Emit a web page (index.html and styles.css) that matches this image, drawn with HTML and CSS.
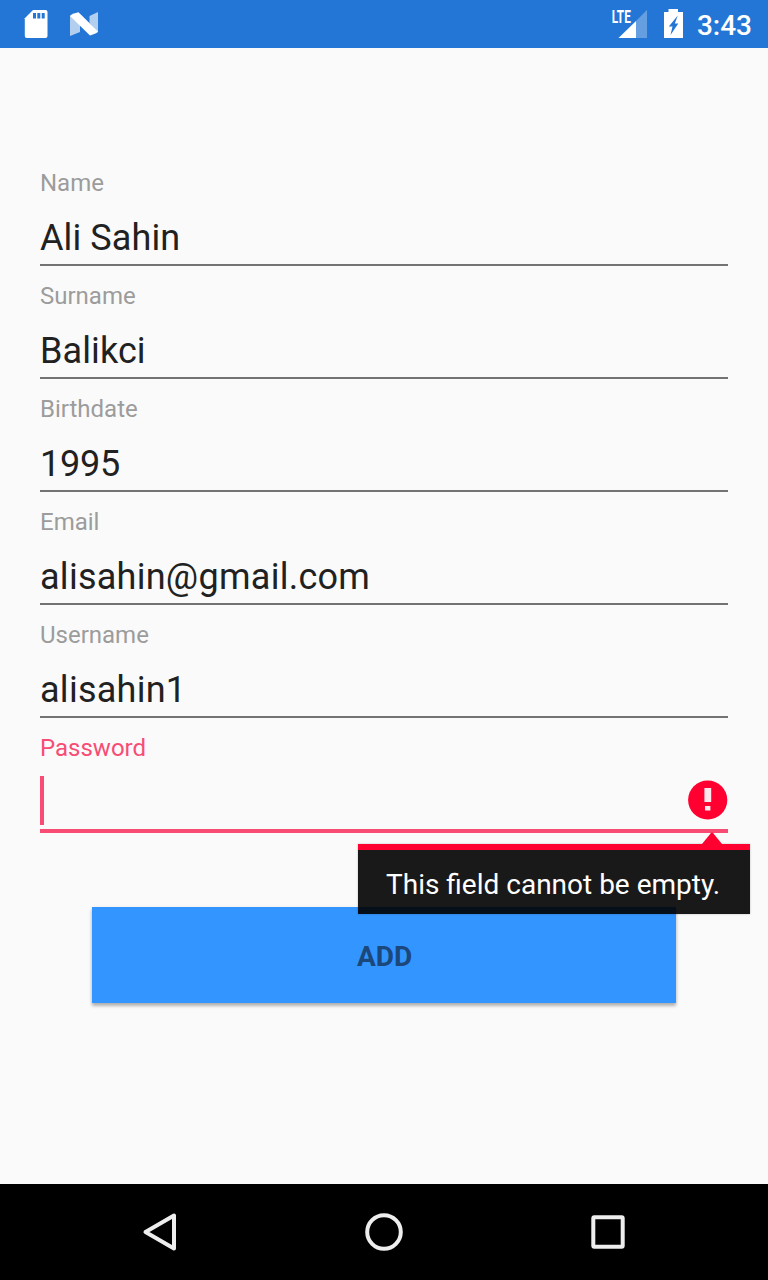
FILE: index.html
```html
<!DOCTYPE html>
<html lang="en">
<head>
<meta charset="utf-8">
<title>Add user</title>
<link rel="stylesheet" href="styles.css">
</head>
<body>
<div class="screen">
  <header class="status-bar">
    <svg class="status-icons" width="100" height="48" viewBox="0 0 100 48">
      <path fill="#fff" d="M33 10H45.500Q47.500 10 47.500 12V36Q47.500 38 45.500 38H26.800Q24.800 38 24.800 36V18.300Z"/>
      <path fill="#2376d5" d="M33 13h3v5.500h-3zM37.300 13h3v5.500h-3zM41.700 13h3v5.500h-3z"/>
      <path fill="#fff" fill-opacity=".65" d="M70 15.500L80 25V32L70 36ZM98 12V32.500L89.500 23V16Z"/>
      <path fill="#fff" d="M70 16Q70 14.500 78.500 12.300L98 31.500Q98 33 90 35.500Z"/>
    </svg>
    <div class="status-right">
      <svg width="80" height="48" viewBox="0 0 80 48">
        <text class="lte" x="3.800" y="22.800" textLength="19" lengthAdjust="spacingAndGlyphs">LTE</text>
        <path fill="#fff" fill-opacity=".3" d="M39 10V38H28V21Z"/>
        <path fill="#fff" d="M28 21V38H10.500Z"/>
        <path fill="#fff" d="M68.500 9h9.500v3h5v26h-19V12h4.500z" transform="translate(-8 0)"/>
        <path fill="#2376d5" d="M69.800 15.500L60.800 26.500H64.500L62.500 35L70.300 23.500H66.800Z"/>
      </svg>
      <span class="clock">3:43</span>
    </div>
  </header>

  <main class="form">
    <div class="field"><label class="label">Name</label><div class="value name">Ali Sahin</div></div>
    <div class="field"><label class="label">Surname</label><div class="value name">Balikci</div></div>
    <div class="field"><label class="label">Birthdate</label><div class="value year">1995</div></div>
    <div class="field"><label class="label">Email</label><div class="value account">alisahin@gmail.com</div></div>
    <div class="field"><label class="label">Username</label><div class="value account">alisahin1</div></div>
    <div class="field focused">
      <label class="label">Password</label>
      <div class="entry">
        <span class="caret"></span>
        <svg class="error-icon" width="40" height="40" viewBox="0 0 40 40">
          <circle cx="19.700" cy="20" r="19.600" fill="#ff0030"/>
          <path fill="#fce8ec" d="M16.400 8h6.800v14h-6.800zM17 26h5.400v4.500h-5.400z"/>
        </svg>
      </div>
      <div class="tooltip">
        <svg class="pointer" width="20" height="12" viewBox="0 0 20 12"><path fill="#ff0030" d="M0 12L8.800 1.200Q10 0 11.200 1.200L20 12Z"/></svg>
        This field cannot be empty.
      </div>
    </div>
    <div class="button">ADD</div>
  </main>

  <nav class="nav-bar">
    <svg width="48" height="48" viewBox="0 0 48 48"><path d="M38 7.500V40.500L9.500 24Z"/></svg>
    <svg width="48" height="48" viewBox="0 0 48 48"><circle cx="24" cy="24" r="16.800"/></svg>
    <svg width="48" height="48" viewBox="0 0 48 48"><rect x="9.300" y="9.300" width="29.400" height="29.400" rx="1"/></svg>
  </nav>
</div>
</body>
</html>
```
FILE: styles.css
```css
* { box-sizing: border-box; }

body {
  margin: 0;
  font-family: Roboto, sans-serif;
}

.screen {
  display: flex;
  flex-direction: column;
  width: 768px;
  height: 1280px;
  background: #fafafa;
}

.screen svg { display: block; }

.status-bar {
  display: flex;
  justify-content: space-between;
  height: 48px;
  padding-right: 16px;
  background: #2376d5;
}

.status-right { display: flex; }

.lte {
  font: 700 18px Roboto, sans-serif;
  fill: #fff;
}

.clock {
  margin-left: 9px;
  color: #fff;
  font-size: 28px;
  font-weight: 500;
  line-height: 51px;
}

.form {
  flex: 1;
  padding: 105px 40px 0;
}

.field {
  height: 113px;
  padding-top: 16px;
  border-bottom: 2px solid #737373;
}

.label {
  display: block;
  color: #9c9c9c;
  font-size: 24px;
  line-height: 28px;
}

.value {
  margin-top: 20px;
  color: #212121;
  font-size: 36px;
  line-height: 42px;
}

.name { letter-spacing: .1px; }
.year { letter-spacing: -.2px; }
.account { letter-spacing: .27px; }

.focused {
  position: relative;
  height: 115px;
  border-bottom: 4px solid #f84c75;
}

.focused .label { color: #f84c75; }

.entry {
  display: flex;
  justify-content: space-between;
  margin-top: 14px;
}

.caret {
  width: 4px;
  height: 49px;
  background: #f84c75;
}

.error-icon { margin-top: 4px; }

.tooltip {
  position: absolute;
  top: 126px;
  right: -22px;
  z-index: 1;
  width: 392px;
  height: 70px;
  padding-left: 28px;
  border-top: 6px solid #ff0030;
  background: rgba(0, 0, 0, .9);
  box-shadow: 0 0 2px rgba(0, 0, 0, .25);
  color: #fff;
  font-size: 28px;
  line-height: 70px;
  white-space: nowrap;
}

.pointer {
  position: absolute;
  top: -18px;
  right: 28px;
}

.button {
  height: 96px;
  margin: 74px 52px 0;
  padding-left: 1px;
  background: #3395ff;
  box-shadow: 0 3px 3px rgba(0, 0, 0, .25), 0 1px 4px rgba(0, 0, 0, .1);
  color: #1b477a;
  font-size: 28px;
  font-weight: 700;
  line-height: 100px;
  text-align: center;
}

.nav-bar {
  display: flex;
  justify-content: center;
  gap: 176px;
  height: 96px;
  padding-top: 24px;
  background: #000;
}

.nav-bar svg {
  fill: none;
  stroke: #eee;
  stroke-width: 4;
  stroke-linejoin: round;
}
```
